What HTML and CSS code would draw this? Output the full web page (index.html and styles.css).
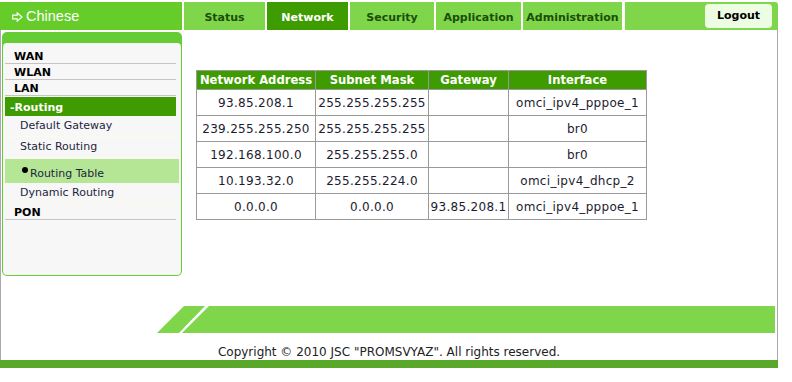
FILE: index.html
```html
<!DOCTYPE html>
<html>
<head>
<meta charset="utf-8">
<link rel="stylesheet" href="styles.css">
</head>
<body>
<div class="page">
  <header class="top">
    <div class="lang">
      <svg class="arrow" width="11" height="10" viewBox="0 0 11 10"><path d="M0.7 3.2 H5.2 V0.9 L10 5 L5.2 9.1 V6.8 H0.7 Z" fill="none" stroke="#fff" stroke-width="1.2" stroke-linejoin="miter"/></svg>
      <span>Chinese</span>
    </div>
    <nav class="tabs">
      <span class="tab t-status">Status</span>
      <span class="tab t-network active">Network</span>
      <span class="tab t-security">Security</span>
      <span class="tab t-app">Application</span>
      <span class="tab t-admin">Administration</span>
    </nav>
    <div class="top-right"><span class="logout">Logout</span></div>
  </header>

  <div class="main">
    <div class="row">
      <aside class="side">
        <div class="side-in">
          <ul class="menu">
            <li class="m1">WAN</li>
            <li class="m1">WLAN</li>
            <li class="m1">LAN</li>
            <li class="m-open">-Routing</li>
            <li class="m2">Default Gateway</li>
            <li class="m2">Static Routing</li>
            <li class="m2 sel"><span class="dot"></span>Routing Table</li>
            <li class="m2">Dynamic Routing</li>
            <li class="m1">PON</li>
          </ul>
        </div>
      </aside>
      <section class="content">
        <table class="rt">
          <colgroup>
            <col class="c1"><col class="c2"><col class="c3"><col class="c4">
          </colgroup>
          <thead>
            <tr><th>Network Address</th><th>Subnet Mask</th><th>Gateway</th><th>Interface</th></tr>
          </thead>
          <tbody>
            <tr><td>93.85.208.1</td><td>255.255.255.255</td><td></td><td>omci_ipv4_pppoe_1</td></tr>
            <tr><td>239.255.255.250</td><td>255.255.255.255</td><td></td><td>br0</td></tr>
            <tr><td>192.168.100.0</td><td>255.255.255.0</td><td></td><td>br0</td></tr>
            <tr><td>10.193.32.0</td><td>255.255.224.0</td><td></td><td>omci_ipv4_dhcp_2</td></tr>
            <tr><td>0.0.0.0</td><td>0.0.0.0</td><td>93.85.208.1</td><td>omci_ipv4_pppoe_1</td></tr>
          </tbody>
        </table>
      </section>
    </div>
    <div class="band">
      <svg width="618" height="27" viewBox="0 0 618 27"><polygon points="0,27 27,0 48,0 22,27" fill="#80d64a"/><polygon points="25,27 52,0 618,0 618,27" fill="#80d64a"/></svg>
    </div>
    <p class="copy">Copyright © 2010 JSC "PROMSVYAZ". All rights reserved.</p>
  </div>
  <div class="bottom"></div>
</div>
</body>
</html>
```
FILE: styles.css
```css
html, body {
  margin: 0;
  padding: 0;
  background: #fff;
}
body {
  font-family: "DejaVu Sans", Verdana, sans-serif;
  font-size: 11px;
  color: #222;
}
.page {
  width: 778px;
}
.top {
  display: flex;
  gap: 2px;
  height: 28px;
  margin-top: 2px;
}
.lang {
  width: 182px;
  background: #66cc2a;
  color: #fff;
  font-family: "Liberation Sans", Arial, sans-serif;
  font-size: 14.5px;
  line-height: 26px;
  display: flex;
  align-items: center;
  padding-left: 12px;
  box-sizing: border-box;
}
.lang .arrow {
  margin-right: 3px;
  margin-top: 1px;
}
.tabs {
  display: flex;
  gap: 2px;
}
.tab {
  background: #80d64a;
  color: #1b4d0b;
  font-weight: bold;
  font-size: 11px;
  text-align: center;
  padding-top: 3px;
  line-height: 25px;
}
.tab.active {
  background: #3e9b00;
  color: #fff;
}
.t-status { width: 81px; }
.t-network { width: 81px; }
.t-security { width: 84px; }
.t-app { width: 85px; }
.t-admin { width: 99px; }
.top-right {
  flex: 1;
  margin-left: 1px;
  background: #80d64a;
  border-top-right-radius: 3px;
  display: flex;
  justify-content: flex-end;
  align-items: flex-start;
  padding: 2px 6px 0 0;
}
.logout {
  width: 67px;
  height: 24px;
  line-height: 24px;
  text-align: center;
  background: #ecfde3;
  border-radius: 4px;
  color: #000;
  font-weight: bold;
  font-size: 11px;
}
.main {
  width: 778px;
  height: 330px;
  box-sizing: border-box;
  border-left: 1px solid #aaa;
  border-right: 1px solid #aaa;
  display: flex;
  flex-direction: column;
}
.row {
  display: flex;
  padding-top: 2px;
}
.side {
  width: 180px;
  height: 244px;
  margin-left: 1px;
  box-sizing: border-box;
  background: #6c3;
  border-radius: 5px;
  padding: 11px 1px 1px 1px;
}
.side-in {
  height: 100%;
  background: #f7f7f7;
  border-radius: 4px;
  padding-top: 5px;
  box-sizing: border-box;
}
.menu {
  list-style: none;
  margin: 0;
  padding: 0;
}
.menu li {
  margin-left: 2px;
  width: 171px;
  box-sizing: border-box;
}
.m1 {
  font-weight: bold;
  color: #000;
  padding: 2px 0 0 9px;
  line-height: 13px;
  border-bottom: 1px solid #c4c4c4;
}
.m1:first-child {
  padding-top: 3px;
  line-height: 12px;
}
.m-open {
  margin-top: 1px;
  background: #3e9b00;
  color: #fff;
  font-weight: bold;
  padding: 3px 0 0 5px;
  line-height: 16px;
}
.m2 {
  color: #1e1e40;
  padding-left: 15px;
  line-height: 20px;
  border-bottom: 1px solid #fbfbe6;
}
.menu li.sel {
  width: 174px;
  margin-top: 1px;
  background: #b5e695;
  border-bottom: none;
  padding: 6px 0 0 17px;
  line-height: 18px;
}
.dot {
  display: inline-block;
  width: 6px;
  height: 6px;
  border-radius: 50%;
  background: #000;
  vertical-align: 4px;
  margin-right: 2px;
}
.content {
  padding: 38px 0 0 14px;
}
.rt {
  border-collapse: collapse;
  table-layout: fixed;
  width: 450px;
}
.rt .c1 { width: 119px; }
.rt .c2 { width: 113px; }
.rt .c3 { width: 80px; }
.rt .c4 { width: 138px; }
.rt th {
  background: #3e9b00;
  color: #fff;
  font-weight: bold;
  font-size: 11.6px;
  height: 18px;
  padding: 0;
  border: 1px solid #9a9a9a;
  text-align: center;
  white-space: nowrap;
}
.rt td {
  height: 25px;
  padding: 0;
  border: 1px solid #9a9a9a;
  text-align: center;
  font-size: 12px;
  letter-spacing: 0.3px;
  color: #1c1c30;
  white-space: nowrap;
}
.band {
  margin: 30px 0 0 156px;
  height: 27px;
  line-height: 0;
}
.copy {
  margin: 0;
  padding-top: 12px;
  line-height: 14px;
  text-align: center;
  color: #222;
  font-size: 12px;
}
.bottom {
  height: 8px;
  background: #5aa829;
}
```
